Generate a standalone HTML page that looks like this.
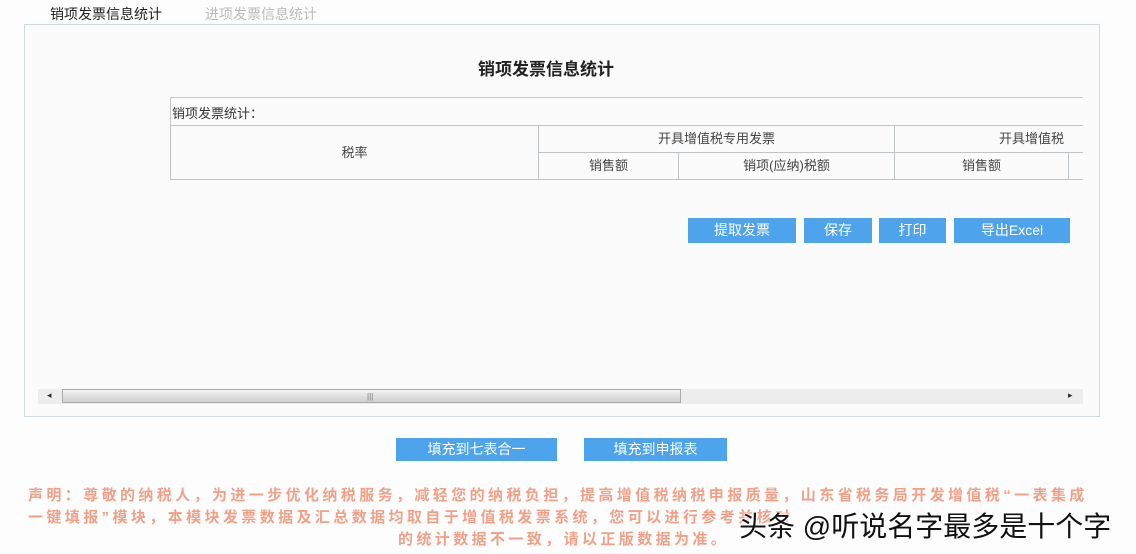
<!DOCTYPE html>
<html><head><meta charset="utf-8"><style>
body{margin:0;width:1136px;height:554px;background:#fdfdfd;position:relative;overflow:hidden;font-family:"Liberation Sans","Noto Sans CJK SC",sans-serif;}
.a{position:absolute;}
.btn{position:absolute;background:#4ea4ec;color:#fff;font-size:14px;text-align:center;line-height:25px;}
.cell{position:absolute;border:1px solid #bfc4c8;box-sizing:border-box;text-align:center;font-size:13px;color:#444;}
.red{position:absolute;color:#ec7a55;font-size:15px;letter-spacing:3.4px;white-space:nowrap;font-weight:bold;opacity:.7}
</style></head><body>
<div class="a" style="left:50px;top:4px;font-size:14px;color:#222">销项发票信息统计</div>
<div class="a" style="left:205px;top:4px;font-size:14px;color:#bbb">进项发票信息统计</div>
<div class="a" style="left:24px;top:24px;width:1074px;height:391px;border:1px solid #cfdbe3;background:#fbfbfb"></div>
<div class="a" style="left:478px;top:55px;font-size:17px;font-weight:bold;color:#222">销项发票信息统计</div>
<div class="a" style="left:170px;top:97px;width:913px;height:28px;border-top:1px solid #c6c9cc;border-left:1px solid #c6c9cc;box-sizing:border-box"></div>
<div class="a" style="left:172px;top:103px;font-size:13px;color:#333">销项发票统计：</div>
<div class="cell" style="left:170px;top:125px;width:369px;height:55px;line-height:53px">税率</div>
<div class="cell" style="left:538px;top:125px;width:357px;height:28px;line-height:26px">开具增值税专用发票</div>
<div class="cell" style="left:894px;top:125px;width:189px;height:28px;line-height:26px;border-right:none;text-align:left;padding-left:104px;white-space:nowrap;overflow:hidden">开具增值税</div>
<div class="cell" style="left:538px;top:152px;width:141px;height:28px;line-height:26px">销售额</div>
<div class="cell" style="left:678px;top:152px;width:217px;height:28px;line-height:26px">销项(应纳)税额</div>
<div class="cell" style="left:894px;top:152px;width:175px;height:28px;line-height:26px">销售额</div>
<div class="cell" style="left:1068px;top:152px;width:15px;height:28px;border-right:none"></div>
<div class="btn" style="left:688px;top:218px;width:108px">提取发票</div>
<div class="btn" style="left:804px;top:218px;width:68px">保存</div>
<div class="btn" style="left:879px;top:218px;width:67px">打印</div>
<div class="btn" style="left:954px;top:218px;width:116px">导出Excel</div>
<div class="a" style="left:38px;top:389px;width:1045px;height:15px;background:#ededed"></div>
<div class="a" style="left:62px;top:389px;width:619px;height:14px;border:1px solid #aaa;background:linear-gradient(#f2f2f2,#cfcfcf);box-sizing:border-box"></div>
<div class="a" style="left:47px;top:390px;font-size:9px;color:#333">◂</div>
<div class="a" style="left:1068px;top:390px;font-size:9px;color:#333">▸</div>
<div class="a" style="left:367px;top:392px;font-size:8px;color:#777">|||</div>
<div class="btn" style="left:396px;top:438px;width:161px;height:23px;line-height:23px">填充到七表合一</div>
<div class="btn" style="left:584px;top:438px;width:143px;height:23px;line-height:23px">填充到申报表</div>
<div class="red" style="left:28px;top:484px">声明：尊敬的纳税人，为进一步优化纳税服务，减轻您的纳税负担，提高增值税纳税申报质量，山东省税务局开发增值税“一表集成</div>
<div class="red" style="left:28px;top:506px">一键填报”模块，本模块发票数据及汇总数据均取自于增值税发票系统，您可以进行参考并核对</div>
<div class="red" style="left:398px;top:528px">的统计数据不一致，请以正版数据为准。</div>
<div class="a" style="left:739px;top:505px;font-size:28px;color:#111;white-space:nowrap;text-shadow:0 0 2px #fff,0 0 2px #fff,0 0 3px #fff,0 0 4px #fff">头条 @听说名字最多是十个字</div>
</body></html>
